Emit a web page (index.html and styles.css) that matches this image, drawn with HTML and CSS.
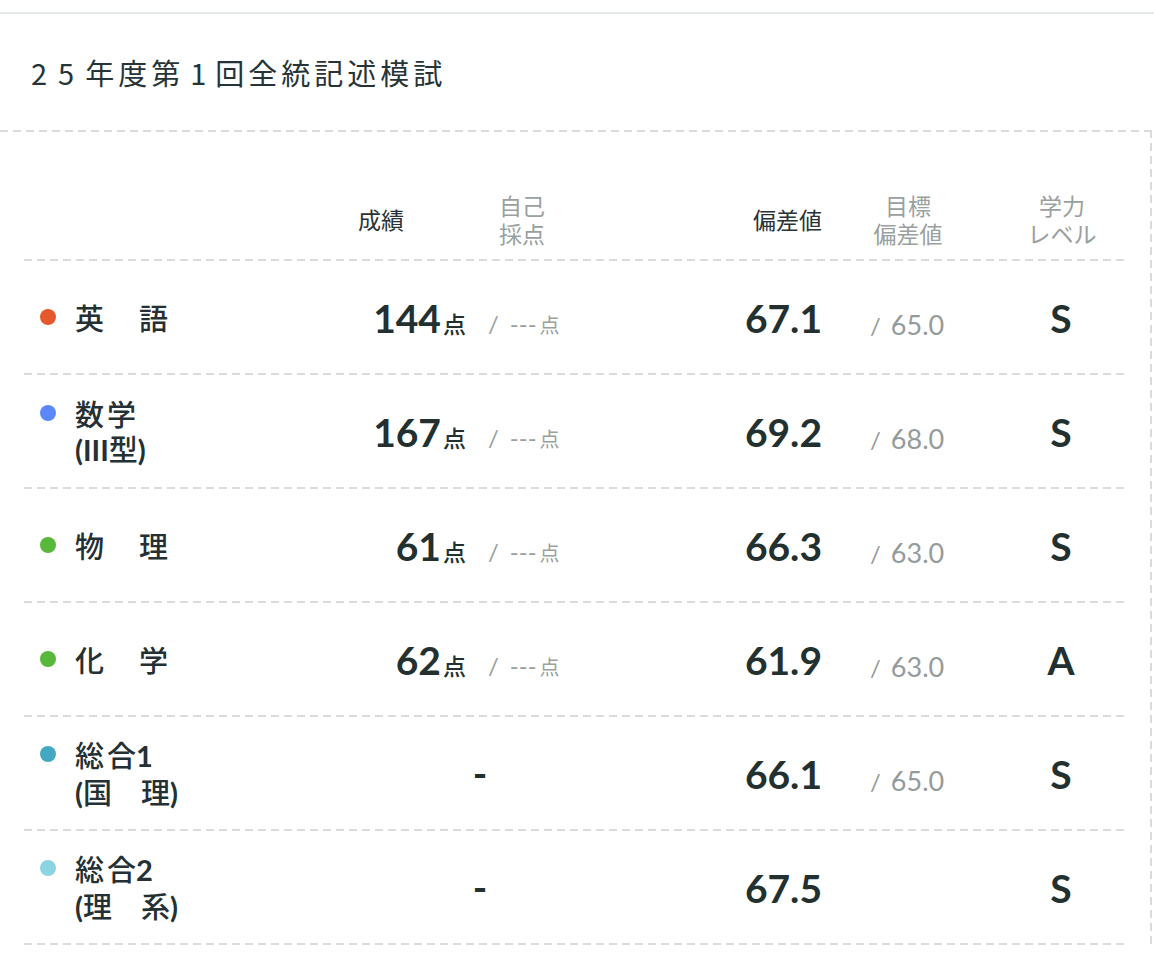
FILE: index.html
```html
<!DOCTYPE html>
<html lang="ja">
<head>
<meta charset="utf-8">
<title>25年度第1回全統記述模試</title>
<link rel="stylesheet" href="styles.css">
</head>
<body>
<div class="topbar"></div>
<h1 class="title"><span class="tdig">25</span>年度第<span class="tdig one">1</span>回全統記述模試</h1>
<section class="panel">
  <div class="row head">
    <div class="h-score dark">成績</div>
    <div class="h-self">自己<br>採点</div>
    <div class="h-dev dark">偏差値</div>
    <div class="h-target">目標<br>偏差値</div>
    <div class="h-level">学力<br>レベル</div>
  </div>

  <div class="row">
    <div class="name"><span class="dot c-en"></span><span class="label"><span class="l1">英　語</span></span></div>
    <div class="score"><span class="big">144</span><span class="unit">点</span></div>
    <div class="self"><span class="slash">/</span><span class="dash">---</span><span class="sunit">点</span></div>
    <div class="dev big">67.1</div>
    <div class="target"><span class="tslash">/</span>65.0</div>
    <div class="level big">S</div>
  </div>

  <div class="row">
    <div class="name two"><span class="dot c-math"></span><span class="label"><span class="l1">数学</span><span class="l2"><span class="num">(III</span>型<span class="num">)</span></span></span></div>
    <div class="score"><span class="big">167</span><span class="unit">点</span></div>
    <div class="self"><span class="slash">/</span><span class="dash">---</span><span class="sunit">点</span></div>
    <div class="dev big">69.2</div>
    <div class="target"><span class="tslash">/</span>68.0</div>
    <div class="level big">S</div>
  </div>

  <div class="row">
    <div class="name"><span class="dot c-green"></span><span class="label"><span class="l1">物　理</span></span></div>
    <div class="score"><span class="big">61</span><span class="unit">点</span></div>
    <div class="self"><span class="slash">/</span><span class="dash">---</span><span class="sunit">点</span></div>
    <div class="dev big">66.3</div>
    <div class="target"><span class="tslash">/</span>63.0</div>
    <div class="level big">S</div>
  </div>

  <div class="row">
    <div class="name"><span class="dot c-green"></span><span class="label"><span class="l1">化　学</span></span></div>
    <div class="score"><span class="big">62</span><span class="unit">点</span></div>
    <div class="self"><span class="slash">/</span><span class="dash">---</span><span class="sunit">点</span></div>
    <div class="dev big">61.9</div>
    <div class="target"><span class="tslash">/</span>63.0</div>
    <div class="level big">A</div>
  </div>

  <div class="row">
    <div class="name two"><span class="dot c-s1"></span><span class="label"><span class="l1">総<span class="last">合</span><span class="num">1</span></span><span class="l2"><span class="num">(</span>国　理<span class="num">)</span></span></span></div>
    <div class="none big">-</div>
    <div class="dev big">66.1</div>
    <div class="target"><span class="tslash">/</span>65.0</div>
    <div class="level big">S</div>
  </div>

  <div class="row">
    <div class="name two"><span class="dot c-s2"></span><span class="label"><span class="l1">総<span class="last">合</span><span class="num">2</span></span><span class="l2"><span class="num">(</span>理　系<span class="num">)</span></span></span></div>
    <div class="none big">-</div>
    <div class="dev big">67.5</div>
    <div class="target"></div>
    <div class="level big">S</div>
  </div>
</section>
</body>
</html>
```

FILE: styles.css
```css
html, body {
  margin: 0;
  padding: 0;
  background: #ffffff;
}

body {
  font-family: Lato, "Noto Sans CJK JP", sans-serif;
  color: #233134;
  width: 1154px;
  height: 954px;
  overflow: hidden;
}

.topbar {
  height: 12px;
  border-bottom: 2px solid #e6e9e9;
}

.title {
  margin: 0;
  height: 116px;
  display: flex;
  align-items: center;
  padding-left: 31px;
  font-family: "Noto Sans CJK JP", sans-serif;
  font-weight: 400;
  font-size: 29px;
  letter-spacing: 4px;
  color: #263337;
}

.tdig {
  letter-spacing: 11px;
}

.tdig.one {
  margin-left: 6px;
  letter-spacing: 9px;
}

.panel {
  margin-right: 2px;
  padding: 3px 26px 0 24px;
  background-image:
    repeating-linear-gradient(to right, #dadcdc 0 8px, transparent 8px 13px),
    repeating-linear-gradient(to bottom, #dadcdc 0 8px, transparent 8px 13px);
  background-size: 100% 2px, 2px 100%;
  background-position: left top, right top;
  background-repeat: no-repeat;
}

.row {
  display: grid;
  grid-template-columns: 306px 136px 114px 242px 174px 130px;
  align-items: center;
  height: 112px;
  background-image: repeating-linear-gradient(to right, #dadcdc 0 8px, transparent 8px 13px);
  background-size: 100% 2px;
  background-position: left bottom;
  background-repeat: no-repeat;
  padding-bottom: 2px;
}

.row.head {
  height: 80px;
  padding-top: 46px;
  font-family: "Noto Sans CJK JP", sans-serif;
  font-weight: 400;
  font-size: 23px;
  line-height: 28px;
  color: #9a9fa0;
}

.row.head .dark {
  color: #2a3235;
}

.h-score {
  grid-column: 2;
  text-align: right;
  padding-right: 62px;
}

.h-self {
  grid-column: 3;
  text-align: center;
  padding-right: 2px;
}

.h-dev {
  grid-column: 4;
  text-align: right;
}

.h-target {
  grid-column: 5;
  text-align: center;
  padding-right: 2px;
}

.h-level {
  grid-column: 6;
  text-align: center;
  padding-left: 2px;
}

.name {
  display: flex;
  align-items: center;
  padding-left: 16px;
}

.name.two {
  align-items: flex-start;
}

.name.two .dot {
  margin-top: 10px;
}

.dot {
  width: 16px;
  height: 16px;
  border-radius: 50%;
  flex: none;
  margin-right: 19px;
}

.c-en { background: #e4582b; }
.c-math { background: #5a88f8; }
.c-green { background: #58b83a; }
.c-s1 { background: #45a8c3; }
.c-s2 { background: #8bd4e1; }

.label {
  display: flex;
  flex-direction: column;
  font-family: "Noto Sans CJK JP", sans-serif;
  font-weight: 500;
  font-size: 29px;
  color: #243033;
}

.l1 {
  line-height: 36px;
  letter-spacing: 3px;
}

.l1 .last {
  letter-spacing: 0;
}

.l2 {
  line-height: 34px;
  letter-spacing: 0;
}

.label .num {
  font-family: Lato, sans-serif;
  font-weight: 700;
  letter-spacing: 0;
}

.big {
  font-family: Lato, sans-serif;
  font-weight: 700;
  font-size: 39px;
  color: #22302f;
}

.score {
  text-align: right;
  white-space: nowrap;
  padding-top: 2px;
}

.unit {
  font-family: "Noto Sans CJK JP", sans-serif;
  font-weight: 500;
  font-size: 23px;
  margin-left: 2px;
  color: #22302f;
}

.self {
  padding-left: 22px;
  padding-top: 14px;
  color: #9a9fa0;
  white-space: nowrap;
}

.slash {
  font-family: Lato, sans-serif;
  font-size: 24px;
  margin-right: 11px;
}

.dash {
  font-family: Lato, sans-serif;
  font-size: 24px;
  font-weight: 400;
  letter-spacing: 0;
}

.sunit {
  font-family: "Noto Sans CJK JP", sans-serif;
  font-size: 20px;
  margin-left: 3px;
}

.none {
  grid-column: 2 / 4;
  text-align: center;
  padding-left: 50px;
}

.dev {
  text-align: right;
  padding-top: 2px;
}

.target {
  padding-left: 48px;
  padding-top: 14px;
  font-family: Lato, sans-serif;
  font-size: 27px;
  color: #959b9c;
}

.tslash {
  margin-right: 10px;
  font-size: 24px;
}

.level {
  text-align: center;
  padding-top: 2px;
}
```
